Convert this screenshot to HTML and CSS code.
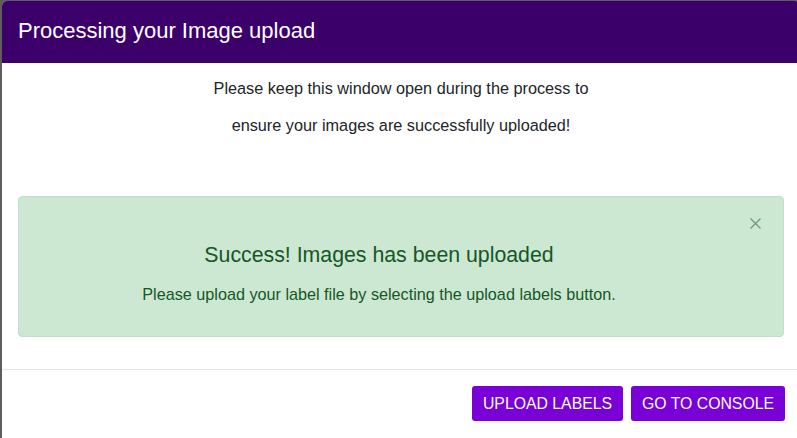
FILE: index.html
```
<!DOCTYPE html>
<html lang="en">
<head>
<meta charset="utf-8">
<title>Processing your Image upload</title>
<link rel="stylesheet" href="styles.css">
</head>
<body>
<div class="modal">
  <div class="modal-header">
    <h1 class="modal-title">Processing your Image upload</h1>
  </div>
  <div class="modal-body">
    <p class="intro">Please keep this window open during the process to<br>ensure your images are successfully uploaded!</p>
    <div class="alert">
      <button class="close" aria-label="Close">
        <svg width="11" height="11" viewBox="0 0 11 11"><path d="M0.5 0.5 L10.5 10.5 M10.5 0.5 L0.5 10.5" stroke="currentColor" stroke-width="1.3" fill="none"/></svg>
      </button>
      <h2 class="alert-heading">Success! Images has been uploaded</h2>
      <p class="alert-text">Please upload your label file by selecting the upload labels button.</p>
    </div>
  </div>
  <div class="modal-footer">
    <button class="btn">UPLOAD LABELS</button>
    <button class="btn">GO TO CONSOLE</button>
  </div>
</div>
</body>
</html>
```
FILE: styles.css
```
html, body {
  margin: 0;
  padding: 0;
  height: 100%;
  overflow: hidden;
}
body {
  background: #5e5e5e;
  font-family: "Liberation Sans", Arial, Helvetica, sans-serif;
}
.modal {
  margin: 1px 0 0 2px;
  width: 798px;
  height: 437px;
  background: #fff;
  border-radius: 5px 5px 0 0;
  overflow: hidden;
  display: flex;
  flex-direction: column;
}
.modal-header {
  flex: none;
  height: 62px;
  background: #3c006b;
  padding: 0 16px;
  display: flex;
  align-items: center;
}
.modal-title {
  margin: 0;
  font-size: 22px;
  font-weight: normal;
  color: #fff;
  position: relative;
  top: -1px;
}
.modal-body {
  padding: 7px 16px 32px;
}
.intro {
  margin: 0 0 52px;
  text-align: center;
  font-size: 16.25px;
  line-height: 37px;
  color: #212529;
}
.alert {
  position: relative;
  height: 139px;
  padding: 0 64px 0 20px;
  background: #cce8d3;
  border: 1px solid #bde0c6;
  border-radius: 4px;
  color: #155724;
  text-align: center;
  display: flex;
  flex-direction: column;
  align-items: center;
}
.alert-heading {
  margin: 45px 0 0;
  font-size: 21.3px;
  font-weight: normal;
  line-height: 26px;
}
.alert-text {
  margin: 17px 0 0;
  font-size: 16.2px;
  line-height: 19px;
}
.close {
  position: absolute;
  top: 21px;
  right: 22px;
  padding: 0;
  border: 0;
  background: none;
  color: #6f9a79;
  line-height: 0;
}
.modal-footer {
  border-top: 1px solid #e5e5e5;
  padding: 16px 15px 0 16px;
  display: flex;
  justify-content: flex-end;
  gap: 8px;
}
.btn {
  height: 35px;
  padding: 0 11px;
  border: 0;
  border-radius: 3px;
  background: #7900d6;
  color: #fff;
  font-family: "Liberation Sans", Arial, Helvetica, sans-serif;
  font-size: 15.8px;
}
```
